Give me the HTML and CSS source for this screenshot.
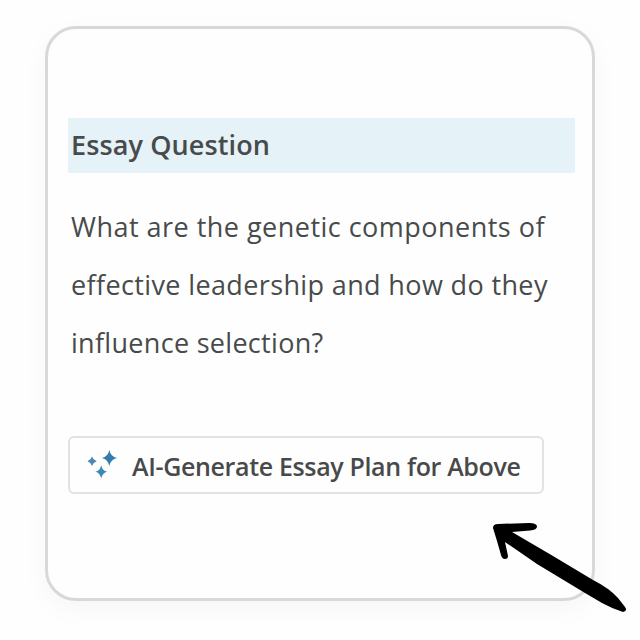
FILE: index.html
```html
<!DOCTYPE html>
<html lang="en">
<head>
<meta charset="utf-8">
<title>Essay Question</title>
<link rel="stylesheet" href="styles.css">
</head>
<body>
<main class="card">
  <h1 class="heading"><span>Essay Question</span></h1>
  <p class="question">
    <span class="line line-a">What are the genetic components of</span>
    <span class="line line-b">effective leadership and how do they</span>
    <span class="line line-c">influence selection?</span>
  </p>
  <button class="generate" type="button">
    <svg class="sparkles" viewBox="0 0 30 30" aria-hidden="true">
      <path fill="#327dac" d="M21.3 0Q22.6 6.7 29 8Q22.6 9.3 21.3 16Q20 9.3 14 8Q20 6.7 21.3 0Z"/>
      <path fill="#5087b6" d="M4 6.6Q5.2 10.2 8.7 11.3Q5.2 12.4 4 16Q2.8 12.4 -.5 11.3Q2.8 10.2 4 6.6Z"/>
      <path fill="#3b8ab3" d="M13.2 15.2Q14.4 20.7 19.2 21.8Q14.4 22.9 13.2 28.4Q12 22.9 7.4 21.8Q12 20.7 13.2 15.2Z"/>
    </svg>
    <span class="label">AI-Generate Essay Plan for Above</span>
  </button>
</main>
<svg class="arrow" viewBox="0 0 170 140" aria-hidden="true">
  <path d="M23 28Q23 24 28 24L59 23Q67 23 67 26.5Q67 30 60 30.5L42 32L83 56L123 80Q139 88 148 98L155 107Q158 111 153 112Q143 109 132 103L115 93L67 64L35 42L38 56Q38 59 35 59Q32 59 31 55L27 41Z"/>
</svg>
</body>
</html>
```
FILE: styles.css
```css
* { box-sizing: border-box; }
body {
  margin: 0;
  height: 640px;
  overflow: hidden;
  padding: 26px 45px;
  background: #fefefe;
  color: #484b4b;
  font-family: "Open Sans", "Noto Sans", sans-serif;
}
.card {
  width: 550px;
  height: 575px;
  padding: 89px 17px 0 20px;
  border: 3px solid #d8d8d8;
  border-radius: 31px;
  background: #fefefe;
  box-shadow: 0 8px 28px rgba(0, 0, 0, .035);
}
.heading {
  height: 55px;
  margin: 0;
  padding-left: 3px;
  background: #e5f2f7;
  font-size: 27px;
  font-weight: 600;
  line-height: 54px;
  letter-spacing: .12px;
}
.question {
  margin: 25px 0 0 3px;
  font-size: 27px;
  line-height: 58px;
}
.line { display: block; width: max-content; white-space: nowrap; }
.line-a { letter-spacing: .48px; }
.line-b { letter-spacing: .37px; }
.line-c { letter-spacing: .3px; }
.generate {
  display: flex;
  align-items: center;
  width: 476px;
  height: 58px;
  margin-top: 64px;
  padding: 0 0 0 18px;
  border: 2px solid #e2e2e0;
  border-radius: 6px;
  background: #fefefe;
  color: #484949;
  font: 600 25px/1 "Open Sans", "Noto Sans", sans-serif;
}
.sparkles { width: 30px; height: 30px; margin-right: 14px; overflow: visible; }
.label { padding-top: 2px; white-space: nowrap; letter-spacing: -.35px; }
.arrow {
  position: absolute;
  left: 470px;
  top: 500px;
  width: 170px;
  height: 140px;
}
```
